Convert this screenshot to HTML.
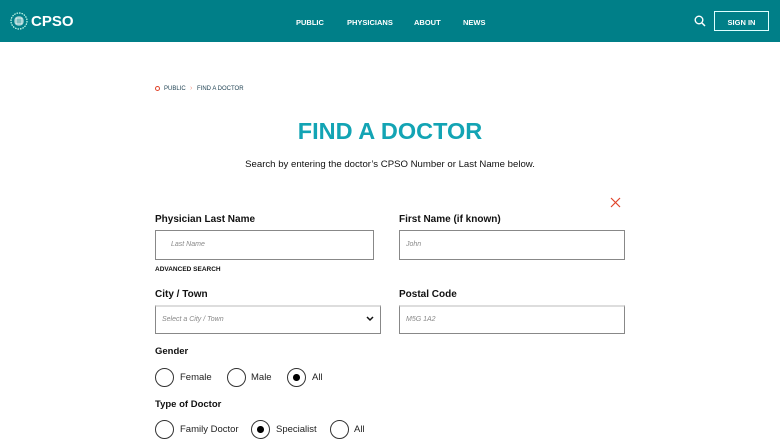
<!DOCTYPE html>
<html><head><meta charset="utf-8"><style>
*{margin:0;padding:0;box-sizing:border-box}
body{width:780px;height:446px;overflow:hidden;background:#fff;font-family:"Liberation Sans",sans-serif;position:relative;color:#111}
.a{position:absolute;white-space:nowrap}
.hdr{position:absolute;left:0;top:0;width:780px;height:42px;background:#007f88}
.nav{font-size:7.5px;font-weight:bold;color:#fff;top:17px}
.lbl{font-size:10px;font-weight:bold;color:#111}
.inp{position:absolute;border:1px solid #888;background:#fff}
.ph{font-size:7px;font-style:italic;color:#888;position:absolute}
.r{position:absolute;width:19px;height:19px;border:1.3px solid #333;border-radius:50%}
.r.on::after{content:"";position:absolute;left:5px;top:5px;width:6.5px;height:6.5px;background:#000;border-radius:50%}
.rt{font-size:9.5px;color:#222}
</style></head><body>
<div class="hdr"></div>
<svg class="a" style="left:10px;top:12px" width="18" height="18" viewBox="0 0 18 18"><circle cx="9" cy="9" r="8" fill="none" stroke="#cfe" stroke-width="1.2" stroke-dasharray="1.5 1"/><circle cx="9" cy="9" r="5" fill="#9cc" opacity=".8"/><rect x="6" y="6" width="6" height="6" fill="none" stroke="#fff" stroke-width=".8"/></svg>
<div class="a" style="left:31px;top:13px;font-size:15px;font-weight:bold;color:#fff">CPSO</div>
<div class="a nav" style="left:296px;top:18px">PUBLIC</div>
<div class="a nav" style="left:347px;top:18px">PHYSICIANS</div>
<div class="a nav" style="left:414px;top:18px">ABOUT</div>
<div class="a nav" style="left:463px;top:18px">NEWS</div>
<svg class="a" style="left:694px;top:15px" width="12" height="12" viewBox="0 0 12 12"><circle cx="5" cy="5" r="3.8" fill="none" stroke="#fff" stroke-width="1.4"/><path d="M8 8L11 11" stroke="#fff" stroke-width="1.5"/></svg>
<div class="a" style="left:714px;top:11px;width:55px;height:20px;border:1px solid #dff"></div>
<div class="a nav" style="left:714px;width:55px;text-align:center;top:18px">SIGN IN</div>

<div class="a" style="left:155px;top:86px;width:5px;height:5px;border:1.5px solid #e0442b;border-radius:50%"></div>
<div class="a" style="left:164px;top:86px;font-size:6px;color:#245">PUBLIC</div>
<div class="a" style="left:190px;top:85px;font-size:7px;color:#e98">›</div>
<div class="a" style="left:197px;top:86px;font-size:6px;color:#245">FIND A DOCTOR</div>

<div class="a" style="left:0;width:780px;text-align:center;top:118px;font-size:23.5px;font-weight:bold;color:#13a4b4">FIND A DOCTOR</div>
<div class="a" style="left:0;width:780px;text-align:center;top:159px;font-size:9.6px;color:#111">Search by entering the doctor’s CPSO Number or Last Name below.</div>

<svg class="a" style="left:610px;top:197px" width="11" height="11" viewBox="0 0 11 11"><path d="M1 1L10 10M10 1L1 10" stroke="#e0442b" stroke-width="1.2"/></svg>

<div class="a lbl" style="left:155px;top:214px">Physician Last Name</div>
<div class="inp" style="left:155px;top:230px;width:219px;height:30px"></div>
<div class="ph" style="left:171px;top:241px">Last Name</div>
<div class="a" style="left:155px;top:266px;font-size:6.5px;font-weight:bold">ADVANCED SEARCH</div>

<div class="a lbl" style="left:399px;top:214px">First Name (if known)</div>
<div class="inp" style="left:399px;top:230px;width:226px;height:30px"></div>
<div class="ph" style="left:406px;top:241px">John</div>

<div class="a lbl" style="left:155px;top:289px">City / Town</div>
<div class="inp" style="left:155px;top:305px;width:226px;height:29px;border-top-color:#ddd;border-top-width:2px"></div>
<div class="ph" style="left:162px;top:316px">Select a City / Town</div>
<svg class="a" style="left:366px;top:316px" width="8" height="6" viewBox="0 0 8 6"><path d="M1 1L4 4L7 1" fill="none" stroke="#111" stroke-width="1.5"/></svg>

<div class="a lbl" style="left:399px;top:289px">Postal Code</div>
<div class="inp" style="left:399px;top:305px;width:226px;height:29px;border-top-color:#ddd;border-top-width:2px"></div>
<div class="ph" style="left:406px;top:316px">M5G 1A2</div>

<div class="a lbl" style="left:155px;top:346px;font-size:9.5px">Gender</div>
<div class="r" style="left:155px;top:368px"></div><div class="a rt" style="left:180px;top:372px">Female</div>
<div class="r" style="left:227px;top:368px"></div><div class="a rt" style="left:251px;top:372px">Male</div>
<div class="r on" style="left:287px;top:368px"></div><div class="a rt" style="left:312px;top:372px">All</div>

<div class="a lbl" style="left:155px;top:399px;font-size:9.5px">Type of Doctor</div>
<div class="r" style="left:155px;top:420px"></div><div class="a rt" style="left:180px;top:424px">Family Doctor</div>
<div class="r on" style="left:251px;top:420px"></div><div class="a rt" style="left:276px;top:424px">Specialist</div>
<div class="r" style="left:330px;top:420px"></div><div class="a rt" style="left:354px;top:424px">All</div>
</body></html>
